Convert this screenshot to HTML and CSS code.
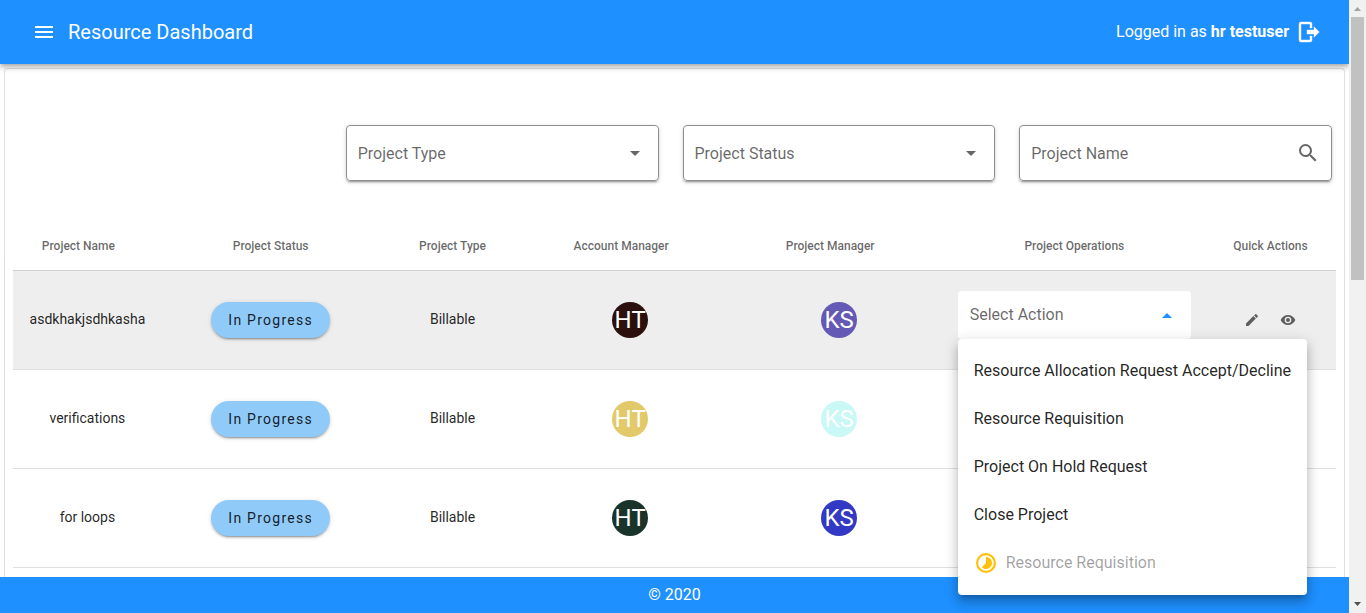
FILE: index.html
```html
<!DOCTYPE html>
<html lang="en">
<head>
<meta charset="utf-8">
<title>Resource Dashboard</title>
<link rel="stylesheet" href="styles.css">
</head>
<body>
<div class="app">
  <header class="app-bar">
    <button class="icon-button" type="button" aria-label="Open navigation">
      <svg class="icon" viewBox="0 0 24 24"><path d="M3 6H21V8H3V6M3 11H21V13H3V11M3 16H21V18H3V16Z"/></svg>
    </button>
    <h1 class="app-title">Resource Dashboard</h1>
    <p class="user">Logged in as <b>hr testuser</b></p>
    <button class="icon-button" type="button" aria-label="Log out">
      <svg class="icon logout" viewBox="0 0 24 24"><path d="M17 17.250V14H10V10H17V6.750L22.250 12L17 17.250M13 2A2 2 0 0 1 15 4V8H13V4H4V20H13V16H15V20A2 2 0 0 1 13 22H4A2 2 0 0 1 2 20V4A2 2 0 0 1 4 2H13Z"/></svg>
    </button>
  </header>

  <main class="content">
    <section class="card">
      <form class="filters">
        <div class="field filter-first">
          <select class="control" aria-label="Project Type"><option>Project Type</option></select>
          <svg class="icon field-icon" viewBox="0 0 24 24"><path d="M7 10L12 15L17 10H7Z"/></svg>
        </div>
        <div class="field">
          <select class="control" aria-label="Project Status"><option>Project Status</option></select>
          <svg class="icon field-icon" viewBox="0 0 24 24"><path d="M7 10L12 15L17 10H7Z"/></svg>
        </div>
        <div class="field">
          <input class="control" type="text" aria-label="Project Name" placeholder="Project Name">
          <svg class="icon field-icon" viewBox="0 0 24 24"><path d="M9.5 3A6.5 6.5 0 0 1 16 9.5C16 11.11 15.41 12.59 14.44 13.73L14.71 14H15.5L20.5 19L19 20.5L14 15.5V14.71L13.73 14.44C12.59 15.41 11.11 16 9.5 16A6.5 6.5 0 0 1 3 9.5A6.5 6.5 0 0 1 9.5 3M9.5 5C7 5 5 7 5 9.5C5 12 7 14 9.5 14C12 14 14 12 14 9.5C14 7 12 5 9.5 5Z"/></svg>
        </div>
      </form>

      <table class="projects">
        <colgroup>
          <col class="col-name"><col class="col-status"><col class="col-type"><col class="col-manager"><col class="col-manager"><col class="col-operations"><col class="col-quick">
        </colgroup>
        <thead>
          <tr>
            <th class="sortable">Project Name</th>
            <th>Project Status</th>
            <th>Project Type</th>
            <th class="sortable">Account Manager</th>
            <th class="sortable">Project Manager</th>
            <th>Project Operations</th>
            <th>Quick Actions</th>
          </tr>
        </thead>
        <tbody>
          <tr class="active">
            <td class="text">asdkhakjsdhkasha</td>
            <td><button class="chip" type="button">In Progress</button></td>
            <td class="text">Billable</td>
            <td><span class="avatar maroon">HT</span></td>
            <td><span class="avatar violet">KS</span></td>
            <td>
              <div class="action">
                <button class="action-select" type="button" aria-expanded="true">
                  <span>Select Action</span>
                  <svg class="icon" viewBox="0 0 24 24"><path d="M7 15L12 10L17 15H7Z"/></svg>
                </button>
                <div class="menu" role="menu">
                  <button class="menu-item" type="button" role="menuitem">Resource Allocation Request Accept/Decline</button>
                  <button class="menu-item" type="button" role="menuitem">Resource Requisition</button>
                  <button class="menu-item" type="button" role="menuitem">Project On Hold Request</button>
                  <button class="menu-item" type="button" role="menuitem">Close Project</button>
                  <button class="menu-item" type="button" role="menuitem" disabled>
                    <svg class="icon pending" viewBox="0 0 24 24"><path d="M12 2A10 10 0 1 0 12 22A10 10 0 1 0 12 2M12 4.200A7.800 7.800 0 1 1 12 19.800A7.800 7.800 0 1 1 12 4.200"/><path d="M12 6V12L7.760 16.240C10.100 18.580 13.900 18.580 16.240 16.240C18.590 13.900 18.590 10.100 16.240 7.760C15.070 6.590 13.540 6 12 6Z"/></svg>
                    Resource Requisition
                  </button>
                </div>
              </div>
            </td>
            <td>
              <div class="quick">
                <button class="icon-button" type="button" aria-label="Edit"><svg class="icon small" viewBox="0 0 24 24"><path d="M20.710 7.040C21.100 6.650 21.100 6 20.710 5.630L18.370 3.290C18 2.900 17.350 2.900 16.960 3.290L15.120 5.120L18.870 8.870M3 17.250V21H6.750L17.810 9.930L14.060 6.180L3 17.250Z"/></svg></button>
                <button class="icon-button" type="button" aria-label="View"><svg class="icon small" viewBox="0 0 24 24"><path d="M12 9A3 3 0 0 0 9 12A3 3 0 0 0 12 15A3 3 0 0 0 15 12A3 3 0 0 0 12 9M12 17A5 5 0 0 1 7 12A5 5 0 0 1 12 7A5 5 0 0 1 17 12A5 5 0 0 1 12 17M12 4.500C7 4.500 2.730 7.610 1 12C2.730 16.390 7 19.500 12 19.500C17 19.500 21.270 16.390 23 12C21.270 7.610 17 4.500 12 4.500Z"/></svg></button>
              </div>
            </td>
          </tr>
          <tr>
            <td class="text">verifications</td>
            <td><button class="chip" type="button">In Progress</button></td>
            <td class="text">Billable</td>
            <td><span class="avatar gold">HT</span></td>
            <td><span class="avatar aqua">KS</span></td>
            <td></td>
            <td></td>
          </tr>
          <tr>
            <td class="text">for loops</td>
            <td><button class="chip" type="button">In Progress</button></td>
            <td class="text">Billable</td>
            <td><span class="avatar green">HT</span></td>
            <td><span class="avatar blue">KS</span></td>
            <td></td>
            <td></td>
          </tr>
        </tbody>
      </table>
    </section>
  </main>

  <footer class="footer">© 2020</footer>
</div>
<div class="scrollbar" aria-hidden="true">
  <svg class="scroll-arrow faded" viewBox="0 0 17 17"><path d="M5 11L8.500 7L12 11Z"/></svg>
  <div class="scroll-track"><div class="scroll-thumb"></div></div>
  <svg class="scroll-arrow" viewBox="0 0 17 17"><path d="M5 6L8.500 10L12 6Z"/></svg>
</div>
</body>
</html>
```

FILE: styles.css
```css
* {
  box-sizing: border-box;
}

body {
  margin: 0;
  height: 100vh;
  display: grid;
  grid-template-columns: 1fr 17px;
  overflow: hidden;
  background: #fff;
  color: rgba(0, 0, 0, 0.87);
  font-family: Roboto, "Liberation Sans", sans-serif;
  font-size: 16px;
  line-height: 24px;
}

button,
select,
input {
  font: inherit;
  color: inherit;
}

button {
  border: 0;
  padding: 0;
  background: none;
  cursor: pointer;
}

.icon {
  display: block;
  width: 24px;
  height: 24px;
  fill: currentColor;
}

.icon.small {
  width: 16px;
  height: 16px;
}

.logout {
  stroke: currentColor;
  stroke-width: 0.4;
}

.app {
  display: flex;
  flex-direction: column;
  height: 100vh;
  min-width: 0;
  overflow: hidden;
}

.app-bar {
  position: relative;
  z-index: 2;
  flex: none;
  display: flex;
  align-items: center;
  height: 64px;
  padding: 0 28px 0 32px;
  background: #1e90ff;
  color: #fff;
  box-shadow: 0 2px 4px -1px rgba(0, 0, 0, 0.2), 0 4px 5px rgba(0, 0, 0, 0.14), 0 1px 10px rgba(0, 0, 0, 0.12);
}

.app-title {
  margin: 0 auto 0 12px;
  font-size: 20px;
  font-weight: 400;
}

.user {
  margin: 0 8px 0 0;
}

.content {
  flex: 1;
  min-height: 0;
  padding: 4px 4px 0;
}

.card {
  min-height: 100%;
  padding: 56px 8px 0;
  border: 1px solid rgba(0, 0, 0, 0.12);
  border-bottom: 0;
  border-radius: 4px 4px 0 0;
}

.filters {
  display: grid;
  grid-template-columns: repeat(4, 1fr);
  gap: 24px;
  margin: 0 4px 41px -4px;
}

.filter-first {
  grid-column: 2;
}

.field {
  display: grid;
  grid-template-columns: 1fr 48px;
  align-items: center;
  height: 56px;
  border-radius: 4px;
  box-shadow: 0 3px 1px -2px rgba(0, 0, 0, 0.2), 0 2px 2px rgba(0, 0, 0, 0.14), 0 1px 5px rgba(0, 0, 0, 0.12);
  color: rgba(0, 0, 0, 0.6);
}

.control {
  grid-area: 1 / 1 / 2 / 3;
  width: 100%;
  height: 56px;
  padding: 0 48px 0 11px;
  border: 1px solid #8f8f8f;
  border-radius: 4px;
  background: #fff;
  appearance: none;
}

select.control {
  padding-top: 2px;
}

.control::placeholder {
  color: inherit;
  opacity: 1;
}

.field-icon {
  grid-area: 1 / 2;
  justify-self: center;
  pointer-events: none;
}

.projects {
  width: 100%;
  table-layout: fixed;
  border-collapse: collapse;
  font-size: 14px;
  line-height: 20px;
  text-align: center;
}

.col-name {
  width: 11.25%;
}

.col-status {
  width: 16.45%;
}

.col-type {
  width: 11.05%;
}

.col-manager {
  width: 15.8%;
}

.col-operations {
  width: 19.75%;
}

.col-quick {
  width: 9.9%;
}

.projects th {
  height: 48px;
  padding: 0;
  color: rgba(0, 0, 0, 0.6);
  font-size: 12px;
  font-weight: 500;
}

.projects .sortable {
  padding-right: 18px;
}

.projects td {
  height: 99px;
  padding: 0;
  border-top: 1px solid rgba(0, 0, 0, 0.12);
}

.projects .text {
  padding-bottom: 2px;
}

.projects tr:last-child td {
  border-bottom: 1px solid rgba(0, 0, 0, 0.12);
}

.active {
  background: #eee;
}

.chip {
  height: 36px;
  padding: 0 17px;
  border-radius: 18px;
  background: #90caf9;
  letter-spacing: 0.09em;
  vertical-align: middle;
  box-shadow: 0 3px 1px -2px rgba(0, 0, 0, 0.2), 0 2px 2px rgba(0, 0, 0, 0.14), 0 1px 5px rgba(0, 0, 0, 0.12);
}

.avatar {
  display: inline-flex;
  align-items: center;
  justify-content: center;
  width: 36px;
  height: 36px;
  border-radius: 50%;
  color: #fff;
  font-size: 24px;
  vertical-align: middle;
}

.maroon { background: #2b100d; }
.violet { background: #6459b5; }
.gold { background: #e2ca6a; }
.aqua { background: #c9f8f6; }
.green { background: #1a342b; }
.blue { background: #3239c4; }

.action {
  position: relative;
  margin: 0 14px;
  padding-bottom: 10px;
  font-size: 16px;
  text-align: left;
}

.action-select {
  display: flex;
  align-items: center;
  justify-content: space-between;
  width: 100%;
  height: 48px;
  padding: 1px 12px 0;
  border-radius: 4px;
  background: #fff;
  color: rgba(0, 0, 0, 0.6);
}

.action-select .icon {
  color: #1e90ff;
}

.menu {
  position: absolute;
  z-index: 3;
  top: 48px;
  left: 0;
  padding: 8px 0;
  border-radius: 4px;
  background: #fff;
  white-space: nowrap;
  box-shadow: 0 5px 5px -3px rgba(0, 0, 0, 0.2), 0 8px 10px 1px rgba(0, 0, 0, 0.14), 0 3px 14px 2px rgba(0, 0, 0, 0.12);
}

.menu-item {
  display: flex;
  align-items: center;
  gap: 8px;
  width: 100%;
  height: 48px;
  padding: 0 16px;
}

.menu-item:disabled {
  color: rgba(0, 0, 0, 0.38);
}

.pending {
  color: #ffc107;
  fill-rule: evenodd;
}

.quick {
  display: flex;
  justify-content: center;
  gap: 20px;
  color: rgba(0, 0, 0, 0.6);
}

.footer {
  position: relative;
  z-index: 1;
  flex: none;
  height: 36px;
  padding: 6px 16px;
  background: #1e90ff;
  color: #fff;
  text-align: center;
}

.scrollbar {
  display: flex;
  flex-direction: column;
  background: #f1f1f1;
}

.scroll-arrow {
  display: block;
  width: 17px;
  height: 17px;
  fill: #505050;
}

.scroll-arrow.faded {
  fill: #a3a3a3;
}

.scroll-track {
  flex: 1;
  padding: 0 2px;
}

.scroll-thumb {
  height: 45.5%;
  background: #c1c1c1;
}
```
